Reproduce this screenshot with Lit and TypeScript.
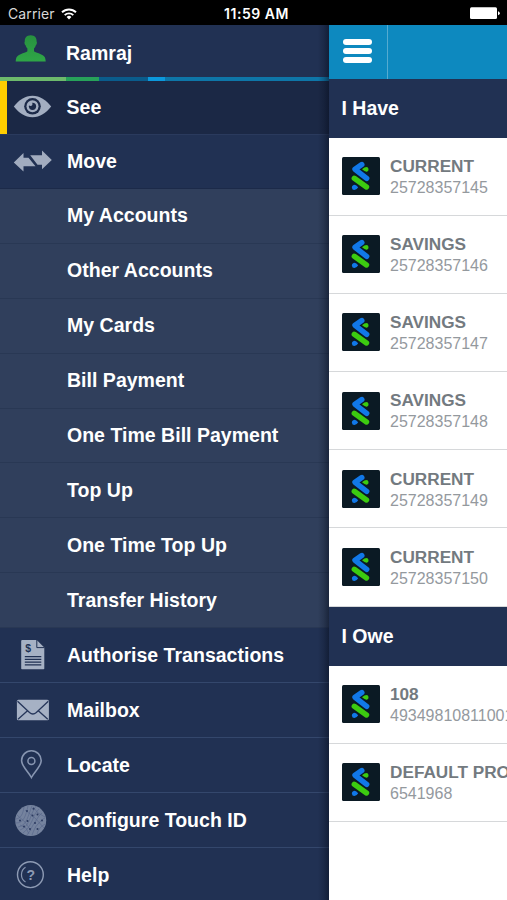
import { LitElement, html, svg, css } from "lit";
import { customElement, property } from "lit/decorators.js";

const icons: Record<string, unknown> = {
  user: svg`<defs><linearGradient id="g" x1="0" y1="0" x2="0" y2="1"><stop offset="0" stop-color="#27913f"/><stop offset="1" stop-color="#2fa647"/></linearGradient></defs>
    <path fill="url(#g)" d="M20.700 5.200C16.500 5.200 14.600 8 14.800 11.500c-.7.500-.3 3 .8 3.800.4 1.500 1 2.500 1.800 3.200v2.700c-1 1.600-8 2.300-10.200 5.300-1 1-1.300 2.500-1.500 5h30c-.2-2.500-.5-4-1.500-5-2.200-3-9.200-3.700-10.200-5.300v-2.700c.8-.7 1.400-1.700 1.800-3.200 1.100-.8 1.500-3.300.8-3.800C26.800 8 24.900 5.200 20.700 5.200z"/>`,
  see: svg`<path fill="#a3aec1" d="M1.800 20.500C7 14 13 9.800 20.500 9.800S34 14 39.200 20.500C34 27 28 31.200 20.500 31.200S7 27 1.800 20.500z"/>
    <circle cx="20.500" cy="20.300" r="8.300" fill="#1c2a49"/><circle cx="20.500" cy="20.300" r="6" fill="#a3aec1"/>
    <circle cx="20.500" cy="20.300" r="3.600" fill="#1c2a49"/><circle cx="18.500" cy="18" r="2" fill="#a3aec1"/>`,
  move: svg`<path fill="#a2acbf" d="M1.800 21.400 11.500 12v4.700h5L23.500 25.300H11.500v5.200zM18.200 14.200H30V9.500L39.800 19 30 28.300v-4.600h-4.500z"/>`,
  bill: svg`<path fill="#a6b1c4" d="M10.200 6h14.500l7.600 7.600V34.500a.8.800 0 0 1-.8.800H10a.8.800 0 0 1-.8-.8V7a1 1 0 0 1 1-1z"/>
    <path fill="none" stroke="#213153" d="M24.800 6v7.600h7.500"/>
    <path stroke="#213153" stroke-width="1.200" d="M12.800 22.700h16.500M12.800 25.400h16.500M12.800 28.100h16.500M12.800 30.800h16.500"/>
    <text x="13.300" y="18.300" font-size="10.500" font-weight="700" fill="#213153" font-family="Liberation Sans, sans-serif">$</text>`,
  mail: svg`<rect x="4.900" y="10.700" width="32" height="20.600" rx="1.500" fill="#a6b1c4"/>
    <path fill="none" stroke="#26365a" stroke-width="1.300" d="M5.500 12.300 17.500 23.500q3.400 3 6.800 0L36.300 12.300M6 30.200l9.500-8.500M35.800 30.200l-9.500-8.500"/>`,
  pin: svg`<path fill="none" stroke="#8795b0" stroke-width="1.600" d="M19.400 33.500C16.500 27.500 9.600 22.500 9.600 16.600a9.800 9.800 0 0 1 19.600 0c0 5.900-6.900 10.900-9.800 16.900z"/><circle cx="19.400" cy="17" r="3.500" fill="none" stroke="#8795b0" stroke-width="1.500"/>`,
  touch: svg`<circle cx="18.700" cy="21.600" r="15.500" fill="#75839e"/>
    <g fill="none" stroke="#56658a" stroke-width=".6"><path d="M4 20c5-1 7-5 8-12M4 24c8 0 10-8 12-17M6 28c9-1 10-12 14-21M8 31c5-2 7-5 9-9s2-7 7-15M11 34c5-4 7-8 9-12s2-7 7-12M15 36c4-5 5-9 8-13s3-6 7-9M20 36c2-5 3-8 6-11s4-5 7-6M25 35c1-4 4-8 8-10M5 16l8 7 6 9M13 11l10 8 9 10M21 8l5 6 7 4M8 26l6 3 3 6"/></g>
    <g fill="#2c3b60"><circle cx="15" cy="12" r="1"/><circle cx="21.500" cy="9.800" r="1"/><circle cx="20.500" cy="16.500" r="1"/><circle cx="25.500" cy="15.500" r="1"/><circle cx="8" cy="21.500" r="1"/><circle cx="15.500" cy="22" r="1"/><circle cx="23" cy="24" r="1"/><circle cx="30" cy="21.500" r="1"/><circle cx="12" cy="27.500" r="1"/><circle cx="18" cy="30" r="1"/><circle cx="25.500" cy="30" r="1"/></g>`,
  help: svg`<circle cx="18.400" cy="20.700" r="12.900" fill="none" stroke="#8e9bb4" stroke-width="1.400"/>
    <path fill="none" stroke="#8795b0" stroke-width="1.200" d="M13.500 13.300a8.800 8.800 0 0 0 0 14.800"/>
    <text x="18.800" y="25.800" text-anchor="middle" font-size="14" font-weight="700" fill="#8e9bb4" font-family="Liberation Sans, sans-serif">?</text>`,
};

@customElement("menu-row")
class MenuRow extends LitElement {
  @property() icon = "";
  @property() label = "";
  static styles = css`
    :host { display: flex; align-items: center; box-sizing: border-box; padding-left: 12px; color: #fff;
      font: 700 19.500px "Liberation Sans", Arial, sans-serif; }
    svg { width: 42px; height: 42px; flex: none; }
    .gap { width: 42px; flex: none; }
    .label { margin-left: 13px; white-space: nowrap; letter-spacing: .02px; }
    :host(.user) .label { margin-left: 14px; padding-top: 5px; }
  `;
  render() {
    return html`${this.icon
        ? html`<svg viewBox="0 0 42 42">${icons[this.icon]}</svg>`
        : html`<span class="gap"></span>`}<span class="label">${this.label}</span>`;
  }
}

@customElement("account-row")
class AccountRow extends LitElement {
  @property() name = "";
  @property() number = "";
  static styles = css`
    :host { display: flex; align-items: center; box-sizing: border-box; height: 78.200px; padding-left: 13px;
      background: #fff; border-bottom: 1px solid #d6d8da; font-family: "Liberation Sans", Arial, sans-serif; }
    svg { width: 38px; height: 38px; flex: none; }
    .text { margin-left: 10.500px; padding-top: 1.400px; white-space: nowrap; }
    .name { font-size: 17.200px; line-height: 21px; font-weight: 700; color: #737a80; }
    .num { font-size: 16px; line-height: 21px; color: #94999e; }
  `;
  render() {
    return html`<svg viewBox="0 0 38 38">
        <rect width="38" height="38" rx="1.500" fill="#0b1a24" />
        <g fill="none" stroke-linecap="round" stroke-width="5.400">
          <path stroke="#1178e8" stroke-linejoin="round" d="M19.800 7.500 13 12.300 24.700 21.300" />
          <path stroke="#3ccb10" d="M12.300 21.300 24.500 30" />
        </g>
        <path fill="#3ccb10" d="M20 12.300q2.500-2.300 4.500-2.300a2.400 2.400 0 0 1 .8 4.500q-1.800.8-5.300-2.200z" />
        <path fill="#1178e8" d="M16.200 30.300q-1.800 3-4 2.800a2.700 2.700 0 0 1-.6-5.200q2-.4 4.600 2.400z" />
      </svg>
      <div class="text"><div class="name">${this.name}</div><div class="num">${this.number}</div></div>`;
  }
}

@customElement("app-root")
class AppRoot extends LitElement {
  static styles = css`
    :host { display: flex; flex-direction: column; width: 507px; height: 900px; overflow: hidden; background: #000;
      font-family: "Liberation Sans", Arial, sans-serif; }
    .status { height: 25px; flex: none; display: grid; grid-template-columns: 1fr auto 1fr; align-items: center;
      padding: 2px 7px 0 8px; box-sizing: border-box; color: #fff; font-family: Inter, sans-serif; font-size: 14px; }
    .carrier { display: flex; align-items: center; gap: 6px; color: #d8d8d8; letter-spacing: .1px; }
    .wifi { width: 16px; height: 12px; }
    .time { font-weight: 600; font-size: 14px; letter-spacing: .55px; padding-left: 5px; }
    .battery { justify-self: end; width: 30px; height: 13px; }
    .main { display: flex; flex: 1; min-height: 0; }
    .menu { width: 328.500px; flex: none; position: relative; background: #213153; overflow: hidden; }
    .menu::after { content: ""; position: absolute; top: 0; right: 0; bottom: 0; width: 11px;
      background: linear-gradient(to right, transparent, rgba(5, 12, 28, .2) 50%, rgba(5, 12, 28, .5)); }
    .user { height: 51.500px; padding-left: 10px; }
    .stripe { height: 4px; background: linear-gradient(to right, #6dba6c 66px, #27a25a 66px 99px, #0a5c8c 99px 148px, #0c98dc 148px 165px, #0e76a8 165px); }
    .item { height: 55px; border-bottom: 1px solid #34476c; }
    .see { height: 53.500px; background: #1b2845; border-left: 7.500px solid #ffce00; padding-left: 4.500px; }
    .move { height: 55px; border-top: 1px solid #2a3a5d; border-bottom: 1px solid #1c2a49; }
    .sub { height: 54.900px; background: #303f5c; border-bottom: 1px solid #293854; }
    .page { flex: 1; min-width: 0; overflow: hidden; background: #fff; }
    .bar { display: flex; height: 54px; background: #0d89bf; }
    .burger { width: 58px; border-right: 1px solid #55abd0; display: flex; flex-direction: column;
      align-items: center; justify-content: center; gap: 3.800px; padding-bottom: 2px; box-sizing: border-box; height: 54px; width: 59px; }
    .burger i { width: 29px; height: 5.200px; border-radius: 3px; background: #fff; }
    .heading { height: 58.500px; display: flex; align-items: center; padding-left: 13px; background: #213153; color: #fff;
      font-size: 19.500px; font-weight: 700; }
    .owe { height: 59px; }
  `;
  render() {
    const subs = ["My Accounts", "Other Accounts", "My Cards", "Bill Payment", "One Time Bill Payment", "Top Up", "One Time Top Up", "Transfer History"];
    const rest = [["bill", "Authorise Transactions"], ["mail", "Mailbox"], ["pin", "Locate"], ["touch", "Configure Touch ID"], ["help", "Help"]];
    const have = [["CURRENT", "25728357145"], ["SAVINGS", "25728357146"], ["SAVINGS", "25728357147"], ["SAVINGS", "25728357148"], ["CURRENT", "25728357149"], ["CURRENT", "25728357150"]];
    const owe = [["108", "49349810811001"], ["DEFAULT PRO", "6541968"]];
    const account = ([name, number]: string[]) => html`<account-row .name=${name} .number=${number}></account-row>`;
    return html`
      <div class="status">
        <div class="carrier">Carrier
          <svg class="wifi" viewBox="0 0 16 12"><g fill="none" stroke="#fff" stroke-width="1.900"><path d="M1 4.300a10 10 0 0 1 14 0M3.700 7.100a6.200 6.200 0 0 1 8.600 0" /></g><path fill="#fff" d="M5.600 9a3.500 3.500 0 0 1 4.800 0L8 11.600z" /></svg>
        </div>
        <div class="time">11:59 AM</div>
        <svg class="battery" viewBox="0 0 30 13"><rect width="27" height="11.800" y=".3" rx="1.500" fill="#fff" /><path fill="#fff" d="M28 4.200q1.800.5 1.800 2t-1.800 2z" /></svg>
      </div>
      <div class="main">
        <div class="menu">
          <menu-row class="user" icon="user" label="Ramraj"></menu-row>
          <div class="stripe"></div>
          <menu-row class="see" icon="see" label="See"></menu-row>
          <menu-row class="move" icon="move" label="Move"></menu-row>
          ${subs.map((s) => html`<menu-row class="sub" .label=${s}></menu-row>`)}
          ${rest.map(([i, l]) => html`<menu-row class="item" .icon=${i} .label=${l}></menu-row>`)}
        </div>
        <div class="page">
          <div class="bar"><div class="burger"><i></i><i></i><i></i></div></div>
          <div class="heading">I Have</div>
          ${have.map(account)}
          <div class="heading owe">I Owe</div>
          ${owe.map(account)}
        </div>
      </div>`;
  }
}
